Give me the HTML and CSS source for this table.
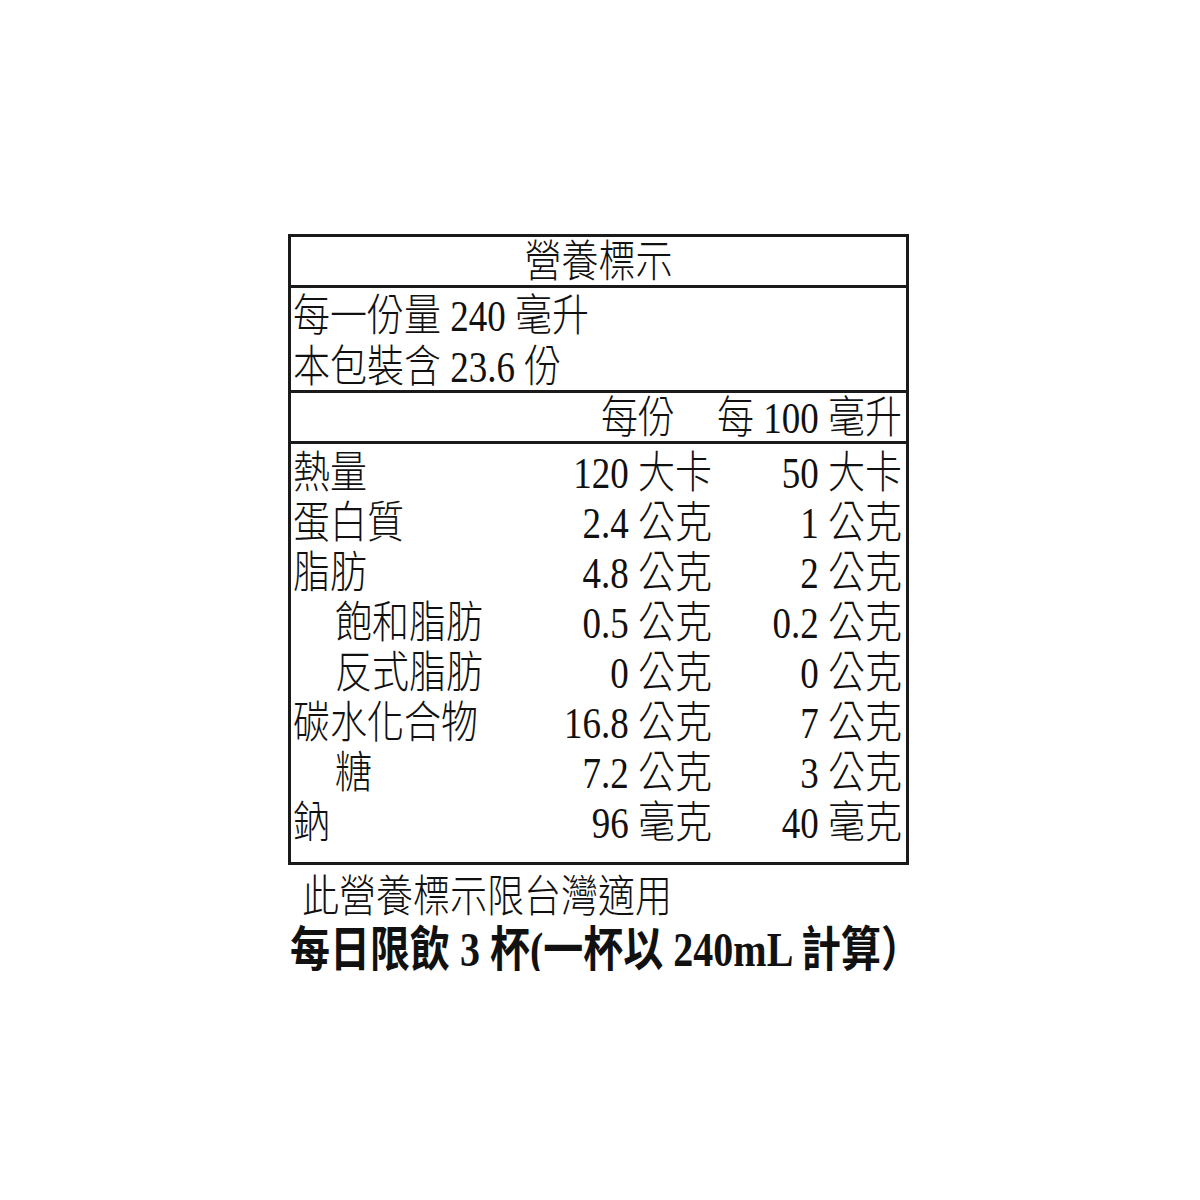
FILE: index.html
```html
<!DOCTYPE html>
<html lang="zh-Hant">
<head>
<meta charset="utf-8">
<title>營養標示</title>
<link rel="stylesheet" href="styles.css">
</head>
<body>
<div class="sheet">
  <div class="label">
    <div class="title"><span class="t">營養標示</span></div>
    <div class="serving">
      <div class="t">每一份量 240 毫升</div>
      <div class="t">本包裝含 23.6 份</div>
    </div>
    <div class="grid head">
      <div></div>
      <div class="c2 t head-c2">每份</div>
      <div class="c3 t">每 100 毫升</div>
    </div>
    <div class="grid rows">
      <div class="t">熱量</div><div class="c2 t">120 大卡</div><div class="c3 t">50 大卡</div>
      <div class="t">蛋白質</div><div class="c2 t">2.4 公克</div><div class="c3 t">1 公克</div>
      <div class="t">脂肪</div><div class="c2 t">4.8 公克</div><div class="c3 t">2 公克</div>
      <div class="t indent">飽和脂肪</div><div class="c2 t">0.5 公克</div><div class="c3 t">0.2 公克</div>
      <div class="t indent">反式脂肪</div><div class="c2 t">0 公克</div><div class="c3 t">0 公克</div>
      <div class="t">碳水化合物</div><div class="c2 t">16.8 公克</div><div class="c3 t">7 公克</div>
      <div class="t indent">糖</div><div class="c2 t">7.2 公克</div><div class="c3 t">3 公克</div>
      <div class="t">鈉</div><div class="c2 t">96 毫克</div><div class="c3 t">40 毫克</div>
    </div>
  </div>
  <p class="note t">此營養標示限台灣適用</p>
  <p class="limit t">每日限飲 3 杯(一杯以 240mL 計算）</p>
</div>
</body>
</html>
```

FILE: styles.css
```css
body {
  margin: 0;
  background: #fff;
  color: #111;
  font-family: "Liberation Serif", "Noto Sans CJK TC", serif;
  font-size: 37px;
  font-weight: 300;
}

.sheet {
  padding: 234px 0 0 288px;
}

.label {
  width: 621px;
  box-sizing: border-box;
  border: 3px solid #1a1a1a;
}

.t {
  transform: translateY(2px) scaleY(1.2);
}

.title {
  height: 48px;
  line-height: 48px;
  text-align: center;
  border-bottom: 3px solid #1a1a1a;
}

.title .t {
  display: inline-block;
}

.serving {
  height: 102px;
  padding-left: 2px;
  border-bottom: 3px solid #1a1a1a;
}

.serving div {
  line-height: 51px;
  white-space: nowrap;
}

.grid {
  display: grid;
  grid-template-columns: 1fr 200px 190px;
  padding: 0 4px 0 2px;
}

.head {
  height: 48px;
  line-height: 48px;
  border-bottom: 3px solid #1a1a1a;
}

.head-c2 {
  padding-right: 37px;
}

.rows {
  padding: 3px 4px 15px 2px;
  grid-auto-rows: 50px;
  line-height: 50px;
}

.rows div {
  white-space: nowrap;
}

.c2,
.c3 {
  text-align: right;
  white-space: nowrap;
}

.indent {
  padding-left: 42px;
}

.note {
  margin: 0;
  padding: 7px 0 0 14px;
  line-height: 46px;
  white-space: nowrap;
}

.limit {
  margin: 7px 0 0 2px;
  line-height: 46px;
  font-size: 40px;
  font-weight: 700;
  white-space: nowrap;
}
```
